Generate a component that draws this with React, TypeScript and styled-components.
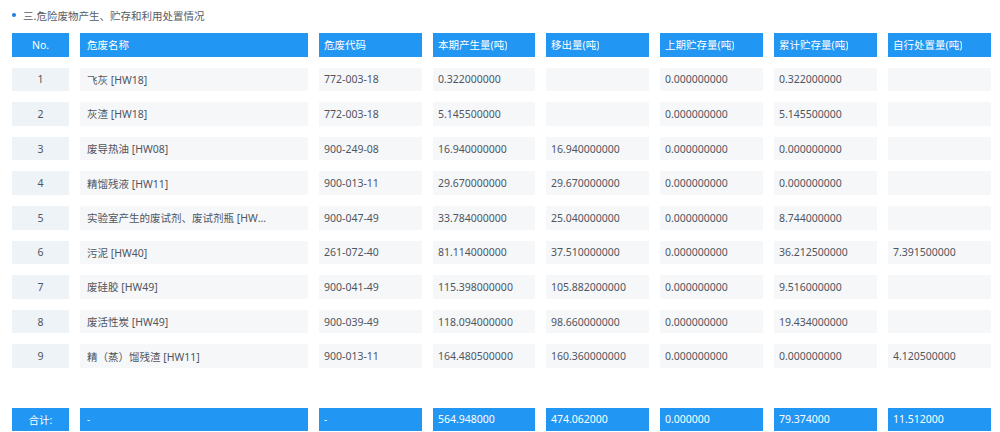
import React from "react";
import styled, { createGlobalStyle } from "styled-components";

const Global = createGlobalStyle`
  html, body { margin: 0; padding: 0; background: #ffffff; }
  body { font-family: "Noto Sans", "Noto Sans CJK SC", sans-serif; }
`;

const Page = styled.div`
  width: 1000px;
  height: 432px;
  box-sizing: border-box;
  padding: 7px 9px 0 12px;
  overflow: hidden;
`;

const Title = styled.div`
  display: flex;
  align-items: center;
  gap: 7px;
  height: 16px;
  font-size: 10.5px;
  color: #555b66;
  font-family: "Noto Sans CJK SC", sans-serif;
`;

const Dot = styled.span`
  width: 4px;
  height: 4px;
  border-radius: 50%;
  background: #1f7fe0;
`;

const Table = styled.div`
  display: flex;
  flex-direction: column;
  gap: 11px;
  margin-top: 10px;
`;

const Row = styled.div<{ $footer?: boolean }>`
  display: grid;
  grid-template-columns: 57px 228px 103px 102px 103px 103px 103px 103px;
  column-gap: 11px;
  height: 23.6px;
  margin-top: ${(p) => (p.$footer ? "28.6px" : "0")};
`;

const Cell = styled.div<{ $kind: "head" | "body" | "foot"; $center?: boolean; $first?: boolean; $pad?: number }>`
  display: flex;
  align-items: center;
  justify-content: ${(p) => (p.$center ? "center" : "flex-start")};
  padding: 0 ${(p) => p.$pad ?? 5}px;
  min-width: 0;
  overflow: hidden;
  font-size: 10.5px;
  font-family: "Noto Sans", "Noto Sans CJK SC", sans-serif;
  background: ${(p) =>
    p.$kind === "body" ? (p.$first ? "#eef3f8" : "#f6f7f9") : "#2196f3"};
  color: ${(p) => (p.$kind === "body" ? "#4f5560" : "#ffffff")};
`;

const Text = styled.span<{ $name?: boolean }>`
  white-space: nowrap;
  overflow: hidden;
  text-overflow: ellipsis;
  max-width: ${(p) => (p.$name ? "183px" : "none")};
`;

const headers = [
  "No.",
  "危废名称",
  "危废代码",
  "本期产生量(吨)",
  "移出量(吨)",
  "上期贮存量(吨)",
  "累计贮存量(吨)",
  "自行处置量(吨)",
];

const rows: string[][] = [
  ["1", "飞灰 [HW18]", "772-003-18", "0.322000000", "", "0.000000000", "0.322000000", ""],
  ["2", "灰渣 [HW18]", "772-003-18", "5.145500000", "", "0.000000000", "5.145500000", ""],
  ["3", "废导热油 [HW08]", "900-249-08", "16.940000000", "16.940000000", "0.000000000", "0.000000000", ""],
  ["4", "精馏残液 [HW11]", "900-013-11", "29.670000000", "29.670000000", "0.000000000", "0.000000000", ""],
  ["5", "实验室产生的废试剂、废试剂瓶 [HW49]", "900-047-49", "33.784000000", "25.040000000", "0.000000000", "8.744000000", ""],
  ["6", "污泥 [HW40]", "261-072-40", "81.114000000", "37.510000000", "0.000000000", "36.212500000", "7.391500000"],
  ["7", "废硅胶 [HW49]", "900-041-49", "115.398000000", "105.882000000", "0.000000000", "9.516000000", ""],
  ["8", "废活性炭 [HW49]", "900-039-49", "118.094000000", "98.660000000", "0.000000000", "19.434000000", ""],
  ["9", "精（蒸）馏残渣 [HW11]", "900-013-11", "164.480500000", "160.360000000", "0.000000000", "0.000000000", "4.120500000"],
];

const footer = ["合计:", "-", "-", "564.948000", "474.062000", "0.000000", "79.374000", "11.512000"];

function renderRow(cells: string[], kind: "head" | "body" | "foot") {
  return cells.map((c, i) => (
    <Cell key={i} $kind={kind} $center={i === 0} $first={i === 0} $pad={i === 1 ? 7 : 5}>
      <Text $name={kind === "body" && i === 1}>{c}</Text>
    </Cell>
  ));
}

export default function App() {
  return (
    <>
      <Global />
      <Page>
        <Title>
          <Dot />
          <span>三.危险废物产生、贮存和利用处置情况</span>
        </Title>
        <Table>
          <Row>{renderRow(headers, "head")}</Row>
          {rows.map((r, i) => (
            <Row key={i}>{renderRow(r, "body")}</Row>
          ))}
          <Row $footer>{renderRow(footer, "foot")}</Row>
        </Table>
      </Page>
    </>
  );
}
